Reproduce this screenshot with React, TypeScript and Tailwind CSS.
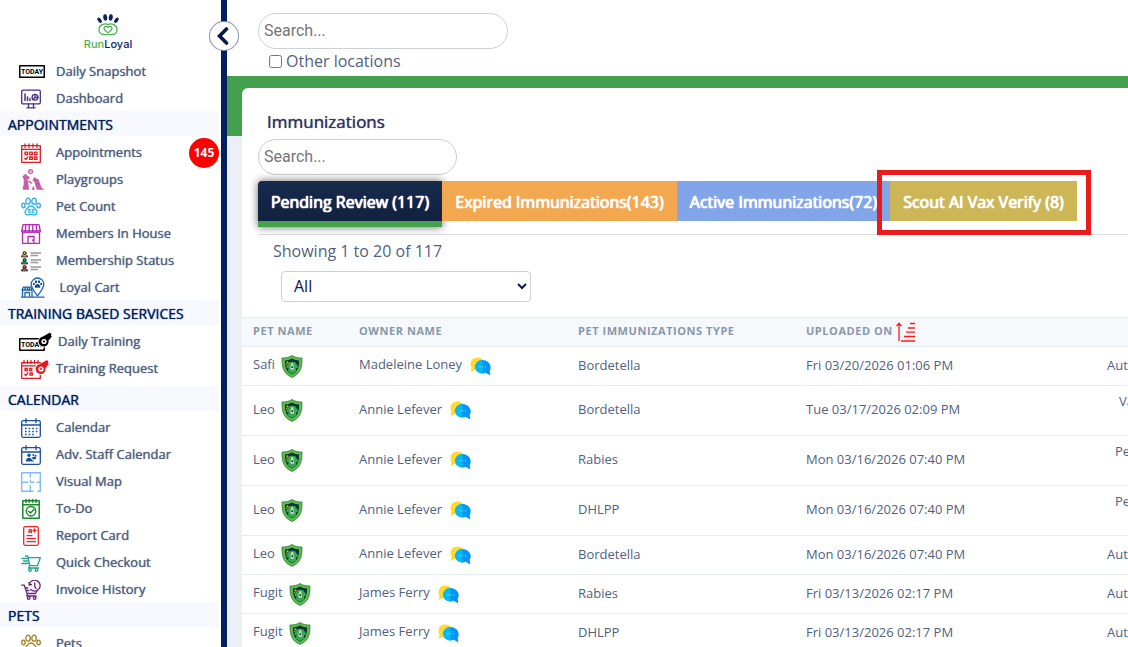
import type { ReactNode } from "react";

type IconProps = { children: ReactNode; color?: string; w?: number; h?: number; sw?: number };

function Ico({ children, color = "#000", w = 20, h = 20, sw = 1.3 }: IconProps) {
  return (
    <svg
      width={w}
      height={h}
      viewBox={`0 0 ${w} ${h}`}
      fill="none"
      stroke={color}
      strokeWidth={sw}
      strokeLinecap="round"
      strokeLinejoin="round"
      aria-hidden="true"
    >
      {children}
    </svg>
  );
}

function Whistle({ color }: { color: string }) {
  return (
    <g stroke="none">
      <circle cx="0" cy="0" r="6" fill="#fff" />
      <path d="M-1.500 -4.800 L6 -9 L7.500 -7 L6.800 -5.500 L8 -5 L4.500 -1 A5 5 0 1 1 -1.500 -4.800Z" fill={color} />
      <circle cx="0" cy="0" r="2.600" fill="#fff" />
      <circle cx="0" cy="0" r="1.100" fill={color} />
    </g>
  );
}

const icons: Record<string, ReactNode> = {
  today: (
    <Ico w={26} h={13} sw={1.5}>
      <rect x="0.750" y="0.750" width="24.500" height="11.500" />
      <text x="13" y="9" textAnchor="middle" fontSize="7" fontWeight="700" fontFamily="Roboto, sans-serif" fill="#000" stroke="none">TODAY</text>
    </Ico>
  ),
  dashboard: (
    <Ico color="#4b2e83">
      <rect x="0.700" y="1.200" width="18.600" height="13.600" rx="1.200" />
      <path d="M7.500 15v3.400M12.500 15v3.400M6 18.900h8" />
      <path d="M4 5v6.500M6.500 8v3.500M9 9.500v2" strokeWidth="1.500" />
      <circle cx="14" cy="8.300" r="2.900" />
      <path d="M14 5.600v2.900h3M14 8.500l-2 2" />
    </Ico>
  ),
  appointments: (
    <Ico color="#e01b22">
      <rect x="0.700" y="2.700" width="18.600" height="16.600" />
      <path d="M1 6.300h18M4 1v3.500M8 1v3.500M12 1v3.500M16 1v3.500" />
      <rect x="4" y="9.200" width="2.600" height="2.400" />
      <rect x="8.700" y="9.200" width="2.600" height="2.400" />
      <rect x="13.400" y="9.200" width="2.600" height="2.400" />
      <path d="M3.700 15.200l1.200 1.400 2-2.800" />
      <rect x="8.700" y="14" width="2.600" height="2.400" />
      <rect x="13.400" y="14" width="2.600" height="2.400" />
    </Ico>
  ),
  playgroups: (
    <Ico color="#c65fa8" w={24} h={24}>
      <g stroke="none" fill="#c65fa8">
        <circle cx="9.500" cy="3.600" r="2.600" />
        <path d="M1.300 8.500L3.500 6.800 5 5.500 6 7.500 8.700 9 8.500 10.600 6.500 11.500 7.300 15.500 8.200 21.800H2.200L1.500 20 2.800 16.500 2.600 11Z" />
        <path d="M12 11l1.500-2 1.600 1.500 2.400.8 1.800 5.200 1.500 3.500 2.800 1.800H16l-1.500-3.500-1-4.500-1.800-.8Z" />
        <path d="M7.500 12l4 3-.6 1-3.500-1.800ZM10.500 21.800l2-4 1.300 4Z" />
      </g>
      <path d="M8.300 3l2.300 1.500M10.500 2.300L9 5" stroke="#fff" strokeWidth="0.700" />
    </Ico>
  ),
  petCount: (
    <Ico color="#25aee4">
      <ellipse cx="7" cy="4.200" rx="2.200" ry="3" />
      <ellipse cx="13" cy="4.200" rx="2.200" ry="3" />
      <ellipse cx="2.400" cy="8.500" rx="1.700" ry="2.300" />
      <ellipse cx="17.600" cy="8.500" rx="1.700" ry="2.300" />
      <path d="M10 9c-2.500 0-3.300 2-4.600 3.400C3.500 14 3.400 17.400 6 17.800c1.400.3 2.600-.4 4-.4s2.600.7 4 .4c2.600-.4 2.500-3.800.6-5.400C13.300 11 12.500 9 10 9Z" />
      <path d="M7.300 12.500h1.900v1.400H7.400v1.500h2M11 12.500h1.900v1.400H11v1.500h2" strokeWidth="1" />
    </Ico>
  ),
  members: (
    <Ico color="#b527b5">
      <path d="M2 .7h16l1.300 6.300H.7Z" />
      <path d="M4.800 1L4.400 7M8.200 1v6M11.800 1v6M15.200 1l.4 6" />
      <path d="M.7 7c.2 2.400 3.500 2.400 3.700 0 .2 2.400 3.600 2.400 3.800 0 .2 2.400 3.400 2.400 3.600 0 .2 2.400 3.600 2.400 3.800 0 .2 2.400 3.500 2.400 3.700 0" />
      <path d="M1.500 9v10.300h17V9M7 19v-6.500h6V19M11.500 16v.5" />
    </Ico>
  ),
  membership: (
    <Ico w={20} h={22} sw={1}>
      {[
        ["#f0c419", 1],
        ["#24ae5f", 8],
        ["#e64c3c", 15],
      ].map(([c, y]) => (
        <g key={String(y)} transform={`translate(0 ${y})`}>
          <path d="M.5 5.500C.7 4 2 3.600 3.500 3.600S6.300 4 6.500 5.500Z" fill={String(c)} stroke="#222" />
          <circle cx="3.500" cy="2" r="1.500" fill={String(c)} stroke="#222" />
          <path d="M9.500 2H20M9.500 4.500H17" stroke="#999" strokeWidth="1.300" strokeLinecap="butt" />
        </g>
      ))}
    </Ico>
  ),
  loyalCart: (
    <Ico color="#1d64a8" w={24} h={21}>
      <path d="M16.500 18.800C13 14.500 10.200 11 10.200 7.300a6.300 6.300 0 0 1 12.600 0c0 3.700-2.800 7.200-6.300 11.500Z" />
      <path d="M1 13l1.300-2.800h7.500l1.200 2.800ZM4 10.500V13M6.300 10.500V13M8.300 10.500V13M1.500 13.500v6M4 15.500h4.500v4.500M4 15.500V20M11 14v6M0 20.200h23" />
      <g fill="#174a7c" stroke="none">
        <path d="M16.500 7c-1.500 0-3.200 2-2.800 3.200.4 1.100 1.800.3 2.800.3s2.400.8 2.800-.3C19.700 9 18 7 16.500 7Z" />
        <ellipse cx="15" cy="4.700" rx="1.100" ry="1.500" />
        <ellipse cx="18" cy="4.700" rx="1.100" ry="1.500" />
        <ellipse cx="12.800" cy="7" rx="1" ry="1.300" />
        <ellipse cx="20.200" cy="7" rx="1" ry="1.300" />
      </g>
    </Ico>
  ),
  dailyTraining: (
    <Ico w={34} h={20} sw={1.500}>
      <rect x="0.750" y="6.750" width="24.500" height="11.500" />
      <text x="2" y="15" fontSize="7" fontWeight="700" fontFamily="Roboto, sans-serif" fill="#000" stroke="none">TODAY</text>
      <g transform="translate(25 9.500)"><Whistle color="#000" /></g>
    </Ico>
  ),
  trainingRequest: (
    <Ico color="#e01b22" w={28} h={20}>
      <rect x="0.700" y="3.700" width="18.600" height="15.600" />
      <path d="M1 6.800h18M3 1.500v3M6.500 1.500v3M10 1.500v3M13.500 1.500v3M17 1.500v3" />
      <rect x="4" y="9.500" width="2.300" height="2.200" />
      <rect x="8.500" y="9.500" width="2.300" height="2.200" />
      <path d="M3.700 15.200l1.200 1.400 2-2.800" />
      <rect x="9" y="14" width="2.300" height="2.200" />
      <g transform="translate(20 10)"><Whistle color="#e01b22" /></g>
    </Ico>
  ),
  calendar: (
    <Ico color="#1c4f9c">
      <rect x="0.700" y="2.700" width="18.600" height="16.600" rx="1.500" />
      <path d="M1 7h18M5 .7v4M15 .7v4" />
      <path d="M4 10.500h13M4 13.500h13M4 16.500h10" strokeWidth="1.600" strokeDasharray="1.600 2" strokeLinecap="butt" />
    </Ico>
  ),
  staff: (
    <Ico color="#1c4f9c">
      <rect x="0.700" y="2.700" width="18.600" height="16.600" rx="1.500" />
      <path d="M1 7h18M5 .7v4M15 .7v4" />
      <g fill="#1c4f9c" stroke="none">
        <circle cx="8" cy="10.300" r="1.700" />
        <path d="M4.800 16.500c0-2.500 1.200-3.800 3.200-3.800s2.500 1 3 2.300l2.500 1.500Z" />
        <circle cx="12.300" cy="10" r="1" />
        <circle cx="14.600" cy="10.800" r="1" />
        <path d="M10.500 12.500l3.500-1 1.500 2-3 1.300Z" />
      </g>
    </Ico>
  ),
  map: (
    <Ico color="#80bdf7" sw={1.400}>
      <path d="M12.500 19.300H.7V.7h18.600v18.600h-3M.7 10.300h6.500M9.300 10.300h4M15.500 10.300h3.800M9.300.7v4.800M9.300 7.500v2.800M9.300 13v6.300" strokeLinecap="butt" />
    </Ico>
  ),
  todo: (
    <Ico color="#188a2b" sw={1.500}>
      <rect x="1.800" y="1.800" width="16.400" height="17.400" />
      <path d="M2 5.700h16" />
      <path d="M5 .7v2.500M8.300.7v2.500M11.700.7v2.500M15 .7v2.500" strokeWidth="1.600" />
      <circle cx="10" cy="12.200" r="4.700" />
      <path d="M7.700 12.200l1.800 1.900 3.300-3.600" />
    </Ico>
  ),
  report: (
    <Ico color="#e8252b">
      <rect x="2.700" y="0.700" width="14.600" height="18.600" rx="1.500" />
      <path d="M8 6.800V4.500c0-1.600 2.400-1.600 2.400 0v2.300M8 5.500h2.400M13.500 3v3M12 4.500h3M6 9.700h5M6 12.700h8.500M6 15.700h8.500" />
    </Ico>
  ),
  checkout: (
    <Ico color="#22a394">
      <path d="M1 5.500h5M2.500 8h4M.7 10.500h6.500M4.500 3h2.300l2 9.700h7.700L19.300 4.700H7.200M8.700 12.700L7.500 15h10" />
      <circle cx="9" cy="17" r="1.300" />
      <circle cx="15.500" cy="17" r="1.300" />
    </Ico>
  ),
  invoice: (
    <Ico color="#69257c">
      <path d="M.7 5.200h2.600l2.700 8.300h8.500l1.300-2.200M6.500 13.500L5.700 16h9.500M4.300 8h2.500M5 10.500h3" />
      <circle cx="7.700" cy="18" r="1.300" />
      <circle cx="13.700" cy="18" r="1.300" />
      <path d="M8.200 4.500a5.500 5.500 0 1 1 1.500 5M8 2.500l.2 2.500 2.400-.5M13.700 3v3.300l1.300 2.200" />
    </Ico>
  ),
  pets: (
    <Ico color="#a67c1c">
      <ellipse cx="7" cy="4.200" rx="2.200" ry="3" />
      <ellipse cx="13" cy="4.200" rx="2.200" ry="3" />
      <ellipse cx="2.400" cy="8.500" rx="1.700" ry="2.300" />
      <ellipse cx="17.600" cy="8.500" rx="1.700" ry="2.300" />
      <path d="M10 9c-2.500 0-3.300 2-4.600 3.400C3.500 14 3.400 17.400 6 17.800c1.400.3 2.600-.4 4-.4s2.600.7 4 .4c2.600-.4 2.500-3.800.6-5.400C13.300 11 12.500 9 10 9Z" />
    </Ico>
  ),
};

type Item = { icon: string; label: string; wide?: boolean; badge?: string };

const groups: { title?: string; items: Item[] }[] = [
  { items: [{ icon: "today", label: "Daily Snapshot", wide: true }, { icon: "dashboard", label: "Dashboard" }] },
  {
    title: "APPOINTMENTS",
    items: [
      { icon: "appointments", label: "Appointments", badge: "145" },
      { icon: "playgroups", label: "Playgroups" },
      { icon: "petCount", label: "Pet Count" },
      { icon: "members", label: "Members In House" },
      { icon: "membership", label: "Membership Status" },
      { icon: "loyalCart", label: "\u00a0Loyal Cart" },
    ],
  },
  {
    title: "TRAINING BASED SERVICES",
    items: [
      { icon: "dailyTraining", label: "Daily Training", wide: true },
      { icon: "trainingRequest", label: "Training Request" },
    ],
  },
  {
    title: "CALENDAR",
    items: [
      { icon: "calendar", label: "Calendar" },
      { icon: "staff", label: "Adv. Staff Calendar" },
      { icon: "map", label: "Visual Map" },
      { icon: "todo", label: "To-Do" },
      { icon: "report", label: "Report Card" },
      { icon: "checkout", label: "Quick Checkout" },
      { icon: "invoice", label: "Invoice History" },
    ],
  },
  { title: "PETS", items: [{ icon: "pets", label: "Pets" }] },
];

function Logo() {
  return (
    <a href="#home" className="flex h-[57px] flex-col items-center pt-[14px] pr-[5px]" aria-label="RunLoyal">
      <svg width="24" height="22" viewBox="0 0 24 22" fill="none" aria-hidden="true">
        <g fill="#0c2461">
          <ellipse cx="9.200" cy="3.400" rx="2" ry="3.300" transform="rotate(-8 9.200 3.400)" />
          <ellipse cx="14.800" cy="3.400" rx="2" ry="3.300" transform="rotate(8 14.800 3.400)" />
          <ellipse cx="3.600" cy="6.200" rx="1.700" ry="3" transform="rotate(-35 3.600 6.200)" />
          <ellipse cx="20.400" cy="6.200" rx="1.700" ry="3" transform="rotate(35 20.400 6.200)" />
        </g>
        <path
          d="M12 10.500c3-1.500 8-.5 9 4.200.5 3.500-1.500 5.500-4 5.800-2 .2-3.500.2-5 .2s-3 0-5-.2c-2.500-.3-4.500-2.300-4-5.800 1-4.700 6-5.700 9-4.200Z"
          stroke="#4caf50"
          strokeWidth="1.300"
        />
        <path d="M12 18.800c-2-1.500-4-2.800-4-4.600 0-2 2.800-2.600 4-.7 1.200-1.900 4-1.300 4 .7 0 1.800-2 3.100-4 4.600Z" stroke="#4caf50" strokeWidth="1.200" />
      </svg>
      <span className="font-[Inter,sans-serif] text-[11px] leading-4 font-medium text-[#0c2461]">
        <span className="text-[#4caf50]">Run</span>Loyal
      </span>
    </a>
  );
}

function Sidebar() {
  return (
    <aside className="relative w-[227px] shrink-0 border-r-[6px] border-[#03205e] bg-white">
      <Logo />
      <nav>
        {groups.map((g, i) => (
          <section key={i}>
            {g.title && (
              <h2 className="mr-[2px] mb-[2px] h-[25px] bg-[#f8f9fe] pl-2 text-[14px] leading-7 text-[#03205e] [text-shadow:0_0_1px_currentColor]">
                {g.title}
              </h2>
            )}
            <ul className={g.title === "TRAINING BASED SERVICES" ? "pb-[5px]" : ""}>
              {g.items.map((it) => (
                <li key={it.label}>
                  <a href="#nav" className={`flex h-[27px] items-center pt-[2px] ${it.wide ? "pl-[19px]" : "pl-[21px]"} pr-[2px]`}>
                    <span className={`flex shrink-0 items-center ${it.icon === "dailyTraining" ? "w-[39px]" : it.wide ? "w-[37px]" : "w-[35px]"}`}>
                      {icons[it.icon]}
                    </span>
                    <span className="grow text-[13px] whitespace-nowrap text-[#525f7f] [text-shadow:0_0_1px_currentColor]">{it.label}</span>
                    {it.badge && (
                      <span className="-my-2 flex size-[30px] items-center justify-center rounded-full bg-[#ff0000] text-[12px] font-bold text-white">
                        {it.badge}
                      </span>
                    )}
                  </a>
                </li>
              ))}
            </ul>
          </section>
        ))}
      </nav>
      <button
        type="button"
        aria-label="Collapse menu"
        className="absolute top-[21px] -right-[18px] z-10 flex size-[30px] items-center justify-center rounded-full border border-[#03205e]/50 bg-white"
      >
        <svg width="12" height="18" viewBox="0 0 12 18" fill="none" stroke="#0a1647" strokeWidth="3.600" strokeLinecap="round" className="-ml-[2px]" aria-hidden="true">
          <path d="M9.500 2L2.500 9l7 7" />
        </svg>
      </button>
    </aside>
  );
}

function Shield() {
  return (
    <svg width="22" height="23" viewBox="0 0 22 23" aria-hidden="true">
      <path d="M11 .5C8 2.500 4.500 3 1 3c0 8 .5 15.500 10 19.500C20.500 18.500 21 11 21 3c-3.500 0-7-.5-10-2.500Z" fill="#5dbb4a" stroke="#2f7d3c" strokeWidth="0.800" />
      <path d="M11 3.400C8.700 4.700 6.500 5.300 4 5.400c0 6 .7 11 7 14 6.300-3 7-8 7-14-2.500-.1-4.700-.7-7-2Z" fill="#0b3038" />
      <path d="M8 7.600c1.500-1.300 5-1.300 6.500 0l2.500 3.900c-.2 2-1.300 2-2 1.500L15 16.500l-4 2.600-4-2.600.5-3.500c-.8.500-1.900.5-2.200-1.500Z" fill="#36aa50" />
      <path d="M10.500 8h1.500l.8 3.500c1 1.500.3 3.500-1.500 3.500s-2.500-2-1.600-3.500Z" fill="#c9dcc6" />
      <circle cx="11.300" cy="12.300" r="1" fill="#102a2c" />
      <circle cx="6.500" cy="7.300" r="1.100" fill="#e2a93b" />
      <circle cx="5.700" cy="9.300" r="0.700" fill="#e2a93b" />
    </svg>
  );
}

function Chat() {
  return (
    <svg width="21" height="19" viewBox="0 0 21 19" aria-hidden="true">
      <path d="M7.500.5c4 0 7 2.800 7 6.500s-3 6.500-7 6.500c-1 0-2-.2-2.800-.6L.7 15l.8-4.400C.8 9.600.5 8.300.5 7 .5 3.300 3.500.5 7.500.5Z" fill="#ffda2d" />
      <path d="M12.500 3c-4 0-7.300 3-7.300 6.800 0 3.700 3.300 6.700 7.300 6.700 1.200 0 2.200-.2 3.200-.7l4.600 2.700-.6-4.500c.7-1.200 1-2.500 1-4.200C20.500 6 16.500 3 12.500 3Z" fill="#0095f6" />
      <path d="M12.500 3c-4 0-7.300 3-7.300 6.800 0 3.700 3.300 6.700 7.300 6.700Z" fill="#00bbf5" />
      <g fill="#b8e6ff">
        <circle cx="10" cy="9.800" r="0.600" />
        <circle cx="12.700" cy="9.800" r="0.600" />
        <circle cx="15.400" cy="9.800" r="0.600" />
      </g>
    </svg>
  );
}

const rows = [
  { pet: "Safi", owner: "Madeleine Loney", type: "Bordetella", date: "Fri 03/20/2026 01:06 PM", note: "Aut" },
  { pet: "Leo", owner: "Annie Lefever", type: "Bordetella", date: "Tue 03/17/2026 02:09 PM", note: "Va" },
  { pet: "Leo", owner: "Annie Lefever", type: "Rabies", date: "Mon 03/16/2026 07:40 PM", note: "Pe" },
  { pet: "Leo", owner: "Annie Lefever", type: "DHLPP", date: "Mon 03/16/2026 07:40 PM", note: "Pe" },
  { pet: "Leo", owner: "Annie Lefever", type: "Bordetella", date: "Mon 03/16/2026 07:40 PM", note: "Aut" },
  { pet: "Fugit", owner: "James Ferry", type: "Rabies", date: "Fri 03/13/2026 02:17 PM", note: "Aut" },
  { pet: "Fugit", owner: "James Ferry", type: "DHLPP", date: "Fri 03/13/2026 02:17 PM", note: "Aut" },
];

const noteStyle: Record<string, string> = {
  Aut: "pl-[13px] pb-[3px]",
  Va: "pl-[25px] pb-5",
  Pe: "pl-[21px] pb-5",
};

function RecordsTable() {
  return (
    <table className="w-full table-fixed border-collapse text-left">
      <colgroup>
        <col className="w-[106px]" />
        <col className="w-[219px]" />
        <col className="w-[228px]" />
        <col className="w-[299px]" />
        <col />
      </colgroup>
      <thead>
        <tr className="h-[29px] border-y border-[#e9ecef] bg-[#f6f9fc] text-[11px] tracking-wider text-[#8898aa]">
          <th className="pb-[2px] pl-[11px] font-bold">PET NAME</th>
          <th className="pb-[2px] pl-[11px] font-bold">OWNER NAME</th>
          <th className="pb-[2px] pl-[11px] font-bold">PET IMMUNIZATIONS TYPE</th>
          <th className="pl-[11px] font-bold">
            <button type="button" className="flex items-center gap-[3px] tracking-wider">
              <span className="pb-[2px]">UPLOADED ON</span>
              <svg width="19" height="20" viewBox="0 0 19 20" fill="none" stroke="#ff1a1a" strokeWidth="1.300" aria-hidden="true">
                <path d="M3 19V2M.5 4L3 1.200 5.500 4M14 1.500h5M12 6h7M10 10.200h9M8 14.500h11M5 19h14" />
              </svg>
            </button>
          </th>
          <th aria-label="Notes" />
        </tr>
      </thead>
      <tbody className="text-[13px] leading-5 text-[#525f7f]">
        {rows.map((r, i) => (
          <tr key={i} className={`border-b border-[#e9ecef] ${r.note === "Aut" ? "h-[39px]" : "h-[50px]"}`}>
            <td className="pl-[11px]">
              <span className="flex items-center gap-[6px]">
                <span className="pb-1">{r.pet}</span>
                <Shield />
              </span>
            </td>
            <td className="pl-[11px]">
              <span className="flex items-center gap-2">
                <span className="pb-1">{r.owner}</span>
                <Chat />
              </span>
            </td>
            <td className="pb-[3px] pl-[11px]">{r.type}</td>
            <td className="pb-[3px] pl-[11px]">{r.date}</td>
            <td className={`whitespace-nowrap ${noteStyle[r.note]}`}>{r.note}</td>
          </tr>
        ))}
      </tbody>
    </table>
  );
}

const tabBase =
  "h-10 pt-[2px] text-[16px] whitespace-nowrap text-white [text-shadow:0_0_1px_currentColor,0_0_1px_currentColor,0_0_1px_currentColor]";

export default function App() {
  return (
    <div className="flex h-screen overflow-hidden bg-white font-['Open_Sans',sans-serif] text-[#525f7f]">
      <Sidebar />
      <main className="flex min-w-0 grow flex-col">
        <header className="h-[76px] shrink-0 pt-[13px] pl-[31px]">
          <input
            type="search"
            aria-label="Search"
            placeholder="Search..."
            className="block h-9 w-[250px] rounded-[18px] border border-[#cad1d7] px-[5px] pb-[2px] font-[Roboto,sans-serif] text-[16px] placeholder:text-[#757575]"
          />
          <label className="ml-[11px] flex h-6 items-center gap-1 text-[16px]">
            <input type="checkbox" className="size-[13px]" />
            Other locations
          </label>
        </header>
        <div className="min-h-0 grow bg-[linear-gradient(to_bottom,#45a04d_60px,#eceff5_60px)] pt-3 pl-[15px]">
          <section className="h-full rounded-tl-md bg-white pt-[21px]">
            <div className="pl-4">
              <h1 className="pl-[9px] text-[17px] leading-[26px] text-[#32325d] [text-shadow:0_0_1px_currentColor]">Immunizations</h1>
              <input
                type="search"
                aria-label="Search immunizations"
                placeholder="Search..."
                className="mt-1 block h-9 w-[199px] rounded-[18px] border border-[#ccc] px-[5px] pb-[2px] font-[Roboto,sans-serif] text-[16px] placeholder:text-[#757575]"
              />
              <div role="tablist" className="mt-[6px] flex h-[54px] items-start border-b border-[#dcdcdc]">
                <button
                  role="tab"
                  aria-selected="true"
                  className="h-[46px] w-[184px] rounded-tl-sm border-b-[6px] border-[#45a04d] bg-linear-to-b from-[#172b4d] to-[#11213f] pt-[2px] text-[16px] whitespace-nowrap text-white shadow-[0_0_9px_rgba(0,0,0,0.6)] [text-shadow:0_0_1px_currentColor,0_0_1px_currentColor,0_0_1px_currentColor]"
                >
                  Pending Review (117)
                </button>
                <button role="tab" aria-selected="false" className={`${tabBase} w-[235px] bg-[#f3a74f]`}>
                  Expired Immunizations(143)
                </button>
                <button role="tab" aria-selected="false" className={`${tabBase} w-[213px] bg-[#82a5ea]`}>
                  Active Immunizations(72)
                </button>
                <div className="relative">
                  <button role="tab" aria-selected="false" className={`${tabBase} w-[187px] bg-[#cdb655]`}>
                    Scout AI Vax Verify (8)
                  </button>
                  <div className="pointer-events-none absolute -top-[11px] -right-[14px] -bottom-[14px] -left-[13px] border-[5px] border-[#e81c1c]" />
                </div>
              </div>
              <p className="pt-1 pl-[15px] text-[16px] leading-6">Showing 1 to 20 of 117</p>
              <select
                aria-label="Filter"
                className="mt-2 mb-[15px] ml-[23px] block h-[31px] w-[250px] rounded border border-[#cad1d7] bg-white px-2 pb-[2px] text-[16px] text-[#11164b]"
              >
                <option>All</option>
              </select>
            </div>
            <RecordsTable />
          </section>
        </div>
      </main>
    </div>
  );
}
